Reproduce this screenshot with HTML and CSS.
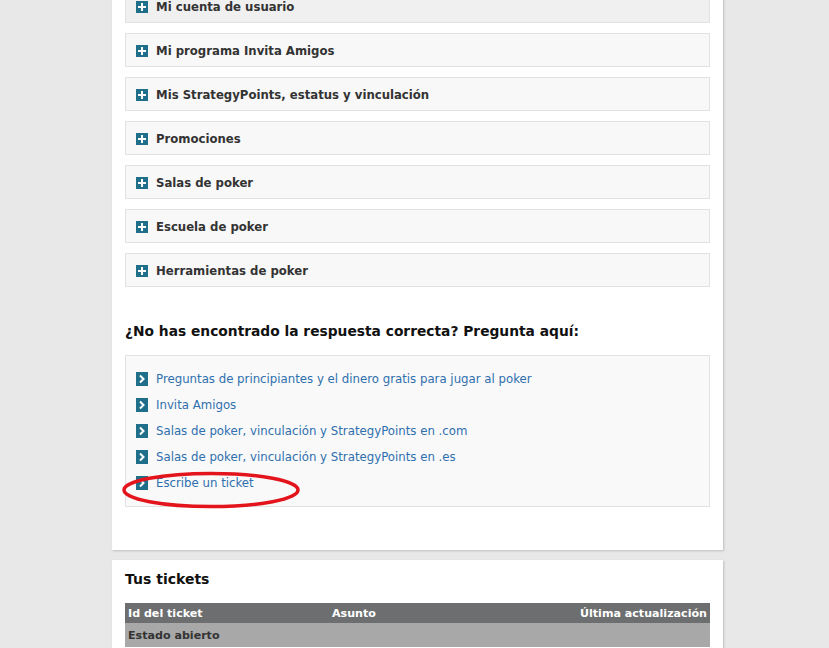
FILE: index.html
```html
<!DOCTYPE html>
<html>
<head>
<meta name="viewport" content="width=device-width, initial-scale=1">
<link rel="stylesheet" href="styles.css">
</head>
<body>
  <!-- Help card: FAQ accordion and contact links -->
  <div class="card card-help">
    <div class="faq-item faq-item-active"><span class="plus"></span>Mi cuenta de usuario</div>
    <div class="faq-item"><span class="plus"></span>Mi programa Invita Amigos</div>
    <div class="faq-item"><span class="plus"></span>Mis StrategyPoints, estatus y vinculación</div>
    <div class="faq-item"><span class="plus"></span>Promociones</div>
    <div class="faq-item"><span class="plus"></span>Salas de poker</div>
    <div class="faq-item"><span class="plus"></span>Escuela de poker</div>
    <div class="faq-item"><span class="plus"></span>Herramientas de poker</div>

    <h2 class="ask-title">¿No has encontrado la respuesta correcta? Pregunta aquí:</h2>
    <ul class="ask-list">
      <li><span class="arrow"></span><a href="#">Preguntas de principiantes y el dinero gratis para jugar al poker</a></li>
      <li><span class="arrow"></span><a href="#">Invita Amigos</a></li>
      <li><span class="arrow"></span><a href="#">Salas de poker, vinculación y StrategyPoints en .com</a></li>
      <li><span class="arrow"></span><a href="#">Salas de poker, vinculación y StrategyPoints en .es</a></li>
      <li class="marked"><span class="arrow"></span><a href="#">Escribe un ticket</a>
        <!-- Red hand-drawn circle around the ticket link -->
        <svg class="ring" width="180" height="42" viewBox="0 0 180 42">
          <ellipse cx="89" cy="20" rx="87" ry="16.5" fill="none" stroke="#e3141c" stroke-width="3.5"/>
        </svg>
      </li>
    </ul>
  </div>

  <!-- Tickets card -->
  <div class="card card-tickets">
    <h2 class="tickets-title">Tus tickets</h2>
    <table class="tickets">
      <tr class="tickets-head">
        <th class="col-id">Id del ticket</th>
        <th class="col-subject">Asunto</th>
        <th class="col-date">Última actualización</th>
      </tr>
      <tr class="tickets-group">
        <td colspan="3">Estado abierto</td>
      </tr>
    </table>
  </div>
</body>
</html>
```

FILE: styles.css
```css
/* Page background and base font */
body {
  margin: 0;
  background-color: #e8e8e8;
  font-family: "DejaVu Sans", Verdana, sans-serif;
  font-size: 12px;
  color: #333;
}

/* White content cards */
.card {
  width: 585px;
  margin-left: 112px;
  padding: 0 13px;
  background-color: #fff;
  box-shadow: 1px 1px 2px rgba(0, 0, 0, 0.18);
}

.card-help {
  margin-top: -24px;
  padding-top: 13px;
  padding-bottom: 43px;
}

.card-tickets {
  margin-top: 10px;
  padding-top: 11px;
  padding-bottom: 20px;
}

/* Accordion rows */
.faq-item {
  display: flex;
  align-items: center;
  height: 30px;
  margin-bottom: 10px;
  padding-top: 2px;
  padding-left: 10px;
  border: 1px solid #e2e2e2;
  background-color: #f8f8f8;
  font-weight: bold;
  font-size: 11.7px;
  color: #333;
}

.faq-item-active {
  background-color: #f0f0f0;
}

/* Square plus icon */
.plus {
  position: relative;
  width: 12px;
  height: 12px;
  margin-right: 8px;
  background-color: #1f6f8b;
}

.plus:before,
.plus:after {
  content: "";
  position: absolute;
  background-color: #fff;
}

.plus:before {
  left: 2px;
  top: 5px;
  width: 8px;
  height: 2px;
}

.plus:after {
  left: 5px;
  top: 2px;
  width: 2px;
  height: 8px;
}

/* "Ask here" block */
.ask-title {
  margin: 36px 0 16px 0;
  font-size: 13.8px;
  font-weight: bold;
  color: #111;
}

.ask-list {
  list-style: none;
  margin: 0;
  padding: 10px 0 10px 10px;
  border: 1px solid #e2e2e2;
  background-color: #f9f9f9;
  font-size: 11.75px;
}

.ask-list li {
  position: relative;
  display: flex;
  align-items: center;
  height: 26px;
}

.ask-list a {
  color: #2f6fae;
  text-decoration: none;
}

/* Square arrow icon */
.arrow {
  width: 12px;
  height: 14px;
  margin-right: 8px;
  background-color: #1f6f8b;
  background-image: url("data:image/svg+xml;utf8,<svg xmlns='http://www.w3.org/2000/svg' width='12' height='14'><path d='M4 3.5 L7.5 7 L4 10.5' fill='none' stroke='white' stroke-width='2'/></svg>");
}

.ring {
  position: absolute;
  left: -14px;
  top: 0;
}

/* Tickets table */
.tickets-title {
  margin: 0 0 16px 0;
  font-size: 14px;
  font-weight: bold;
  color: #111;
}

.tickets {
  width: 100%;
  border-collapse: collapse;
  font-size: 11.1px;
}

.tickets th {
  height: 20px;
  padding: 0 3px;
  background-color: #6d6e70;
  color: #fff;
  font-weight: bold;
  text-align: left;
}

.tickets th.col-id {
  width: 198px;
}

.tickets th.col-date {
  text-align: right;
}

.tickets-group td {
  height: 24px;
  padding: 0 3px;
  background-color: #a8a8a8;
  font-weight: bold;
  color: #333;
}
```
